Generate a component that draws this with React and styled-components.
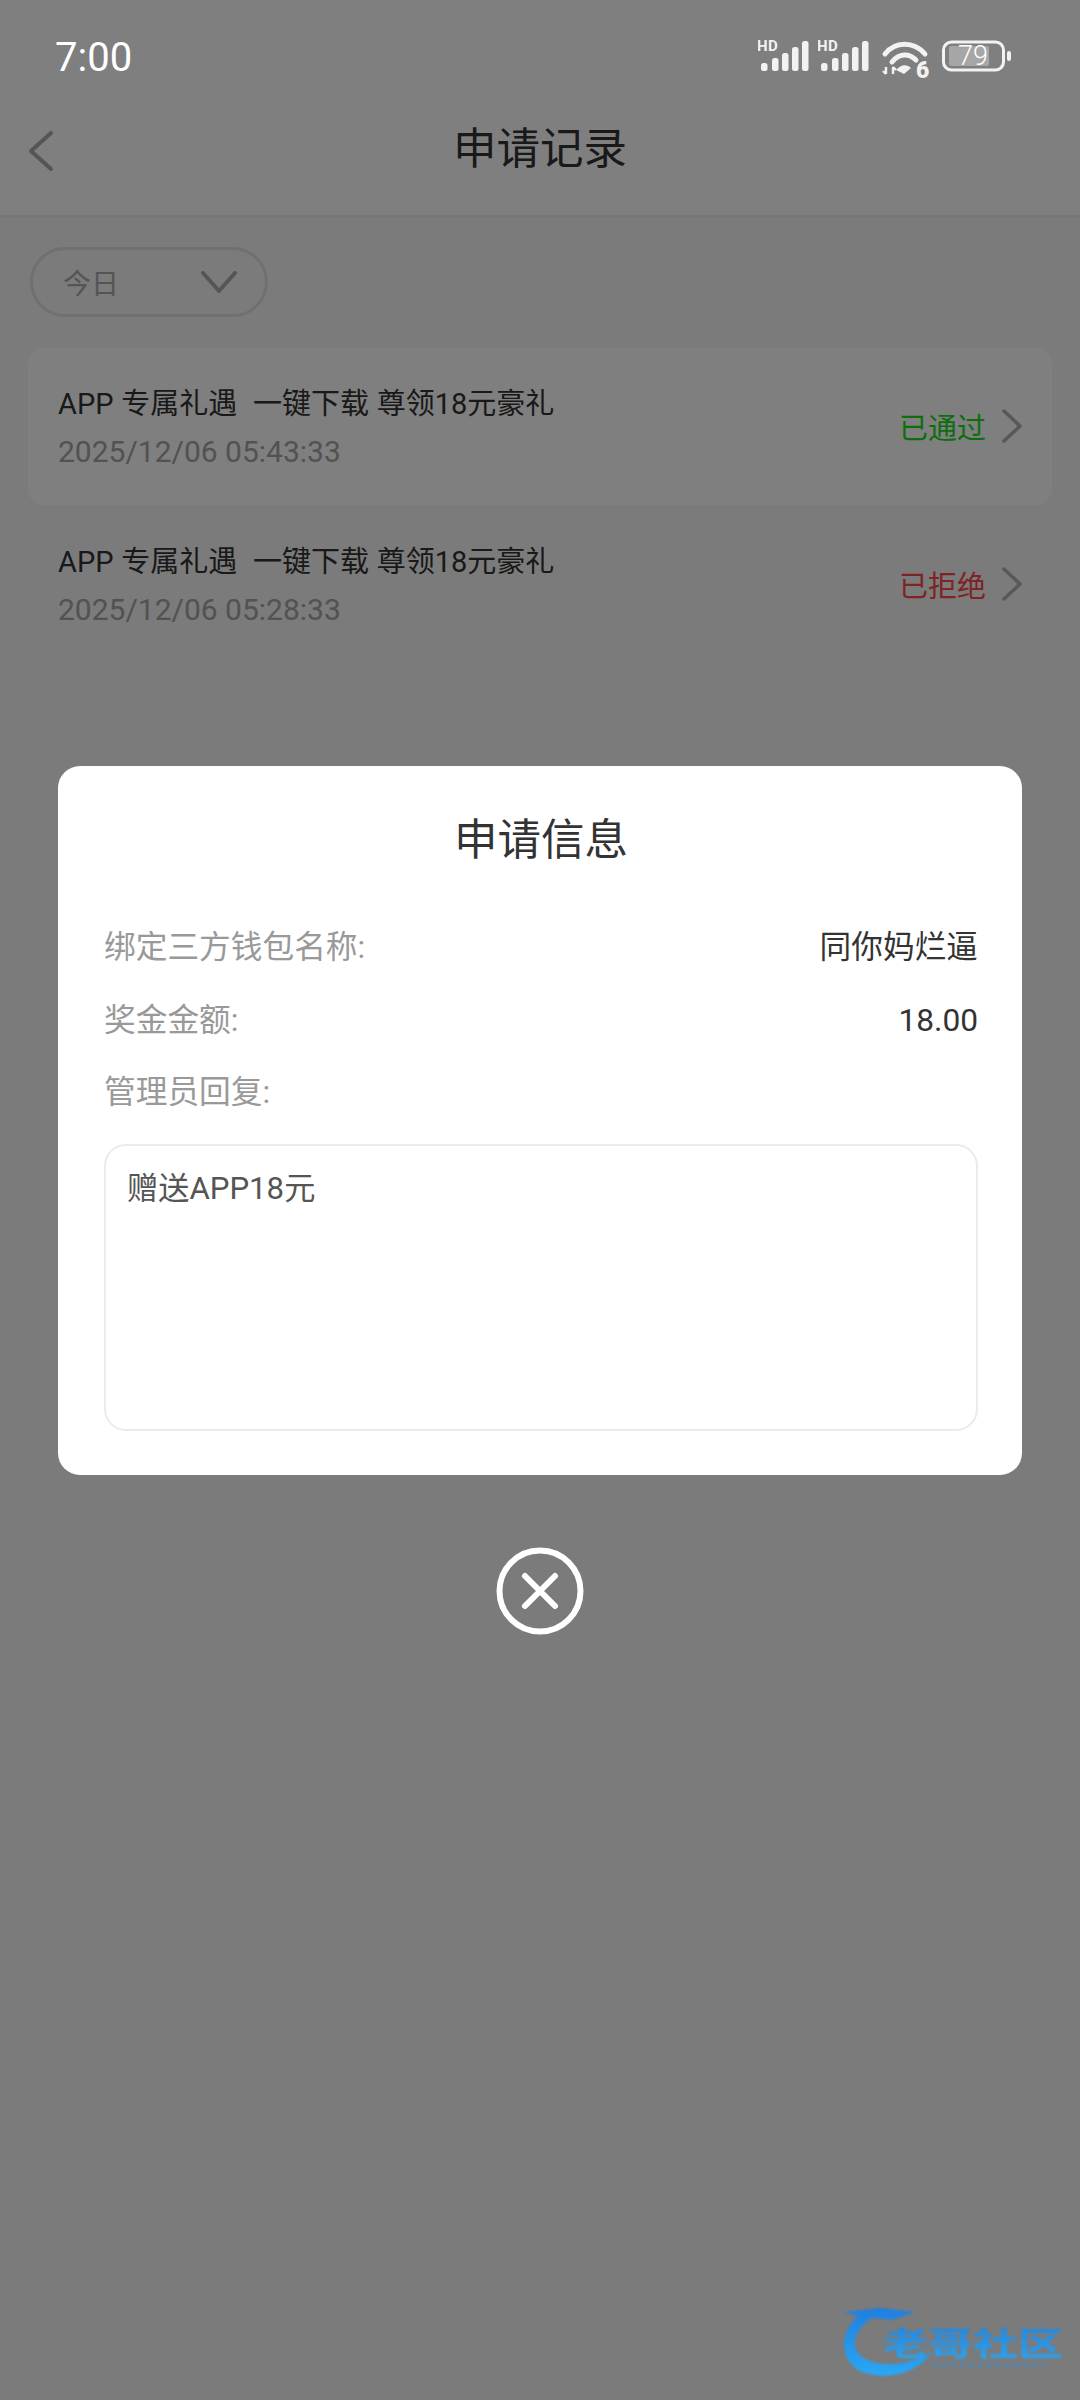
import React from 'react';
import styled, { createGlobalStyle } from 'styled-components';

const GlobalStyle = createGlobalStyle`
  html, body {
    margin: 0;
    padding: 0;
    background: #f5f5f5;
  }
  * {
    box-sizing: border-box;
  }
`;

const FONT = `Roboto, "Noto Sans CJK SC", sans-serif`;

const Page = styled.div`
  position: relative;
  width: 1080px;
  height: 2400px;
  overflow: hidden;
  background: #f6f6f6;
  font-family: ${FONT};
  font-weight: 400;
  display: flex;
  flex-direction: column;
`;

const Header = styled.div`
  background: #fff;
  border-bottom: 2px solid #ececec;
  height: 217px;
  flex-shrink: 0;
  display: flex;
  flex-direction: column;
  justify-content: flex-end;
`;

const Nav = styled.div`
  position: relative;
  height: 135px;
  display: flex;
  align-items: center;
  justify-content: center;
`;

const NavTitle = styled.div`
  font-size: 43.5px;
  line-height: 50px;
  color: #333;
  font-weight: 400;
  margin-top: 4px;
`;

const BackButton = styled.svg`
  position: absolute;
  left: 27px;
  top: 50px;
  width: 28px;
  height: 42px;
`;

const StatusBar = styled.div`
  position: absolute;
  z-index: 3;
  top: 0;
  left: 0;
  width: 1080px;
  height: 88px;
  padding: 31px 68px 0 55px;
  display: flex;
  justify-content: space-between;
  align-items: flex-start;
`;

const Time = styled.div`
  font-family: Roboto, sans-serif;
  font-size: 40px;
  line-height: 54px;
  color: #fff;
  font-weight: 400;
`;

const StatusIcons = styled.div`
  display: flex;
  align-items: flex-start;
  margin-top: 9px;
`;

const SignalIcon = styled.svg`
  width: 52px;
  height: 38px;
  margin: -4px 8px 0 0;
`;

const WifiIcon = styled.svg`
  width: 52px;
  height: 46px;
  margin: -1px 9px 0 3px;
`;

const BatteryIcon = styled.svg`
  width: 70px;
  height: 32px;
`;

const FilterBar = styled.div`
  padding: 30px 30px 31px;
`;

const FilterPill = styled.div`
  width: 238px;
  height: 70px;
  border: 3px solid #e0e0e0;
  border-radius: 35px;
  display: flex;
  align-items: center;
  justify-content: space-between;
  padding: 0 28px 0 30px;
  font-size: 28px;
  color: #aaa;
`;

const PillArrow = styled.svg`
  width: 36px;
  height: 22px;
`;

const List = styled.div`
  margin: 0 28px;
  display: flex;
  flex-direction: column;
  gap: 1px;
`;

const Row = styled.div`
  height: 157px;
  border-radius: 16px;
  background: ${(p) => (p.$active ? '#ffffff' : 'transparent')};
  padding: 0 29px 0 30px;
  display: flex;
  align-items: center;
  justify-content: space-between;
`;

const RowText = styled.div`
  display: flex;
  flex-direction: column;
  gap: 10px;
  margin-top: 3px;
`;

const RowTitle = styled.div`
  font-size: 29px;
  line-height: 38px;
  color: #333;
  white-space: pre;
  word-spacing: 0.6px;
`;

const RowDate = styled.div`
  font-size: 30px;
  line-height: 38px;
  color: #a4a4a4;
`;

const RowStatus = styled.div`
  display: flex;
  align-items: center;
  gap: 15px;
  font-size: 29px;
  color: ${(p) => p.$color};
  margin-top: -2px;
`;

const RowArrow = styled.svg`
  width: 22px;
  height: 34px;
`;

const Scrim = styled.div`
  position: absolute;
  z-index: 2;
  inset: 0;
  background: rgba(0, 0, 0, 0.5);
  display: flex;
  flex-direction: column;
  align-items: center;
  padding-top: 766px;
`;

const Modal = styled.div`
  width: 964px;
  height: 709px;
  background: #fff;
  border-radius: 22px;
  padding: 49px 44px 44px 46px;
  display: flex;
  flex-direction: column;
`;

const ModalTitle = styled.div`
  font-size: 43.5px;
  line-height: 52px;
  font-weight: 400;
  color: #333;
  text-align: center;
  margin-bottom: 59px;
`;

const InfoRow = styled.div`
  height: 72.5px;
  flex-shrink: 0;
  display: flex;
  justify-content: space-between;
  align-items: flex-start;
  font-size: 31.7px;
  line-height: 44px;
`;

const InfoLabel = styled.span`
  color: #999;
`;

const InfoValue = styled.span`
  color: #333;
`;

const ReplyBox = styled.div`
  flex: 1;
  border: 2px solid #ebebeb;
  border-radius: 22px;
  padding: 21px 21px;
  font-size: 31.2px;
  line-height: 44px;
  color: #555;
`;

const CloseIcon = styled.svg`
  width: 88px;
  height: 88px;
  margin-top: 72px;
`;

const Watermark = styled.div`
  position: absolute;
  z-index: 4;
  right: 0;
  bottom: 0;
  width: 260px;
  height: 110px;
`;

const WatermarkArt = styled.svg`
  width: 260px;
  height: 110px;
  filter: blur(1.3px);
`;

const Signal = () => (
  <SignalIcon viewBox="0 0 52 38">
    <text x="-1" y="15" fontFamily="Roboto, sans-serif" fontWeight="700" fontSize="15" letterSpacing="0.5" fill="#f2f2f2">HD</text>
    <g fill="#f2f2f2">
      <rect x="3" y="27" width="6.5" height="8" rx="2.5" />
      <rect x="14" y="22" width="6.5" height="13" rx="2.5" />
      <rect x="24" y="17" width="6.5" height="18" rx="2.5" />
      <rect x="34" y="11" width="6.5" height="24" rx="2.5" />
      <rect x="44" y="5" width="6.5" height="30" rx="2.5" />
    </g>
  </SignalIcon>
);

const Wifi = () => (
  <WifiIcon viewBox="0 0 52 46">
    <g fill="none" stroke="#f2f2f2" strokeWidth="5" strokeLinecap="round">
      <path d="M4 15 C14 2 33 2 44 15" />
      <path d="M11 23 C18 14 28 14 35 21" />
    </g>
    <path d="M15 31 C20 25 26 25 30 29 L23 35 Z" fill="#f2f2f2" />
    <text x="35" y="39" fontFamily="Roboto, sans-serif" fontWeight="900" fontSize="23" fill="#f2f2f2">6</text>
    <path d="M5 28 L5 35 M2 32 L5 35 M12 35 L12 28 M12 28 L15 31" stroke="#f2f2f2" strokeWidth="2.4" fill="none" />
  </WifiIcon>
);

const Battery = () => (
  <BatteryIcon viewBox="0 0 70 32">
    <rect x="1.5" y="2" width="60" height="28" rx="8" fill="none" stroke="#f2f2f2" strokeWidth="3" />
    <rect x="7" y="6" width="40" height="20" rx="2" fill="#a6a6a6" />
    <rect x="65" y="11" width="4" height="10" rx="2" fill="#f2f2f2" />
    <text x="31" y="25" textAnchor="middle" fontFamily="Roboto, sans-serif" fontWeight="300" fontSize="27" fill="#fff">79</text>
  </BatteryIcon>
);

const records = [
  { date: '2025/12/06 05:43:33', status: '已通过', color: '#18dc18', active: true },
  { date: '2025/12/06 05:28:33', status: '已拒绝', color: '#fa4848', active: false },
];

const App = () => {
  return (
    <Page>
      <GlobalStyle />
      <StatusBar>
        <Time>7:00</Time>
        <StatusIcons>
          <Signal />
          <Signal />
          <Wifi />
          <Battery />
        </StatusIcons>
      </StatusBar>

      <Header>
        <Nav>
          <BackButton viewBox="0 0 28 42">
            <path d="M24 3 L4 21 L24 39" fill="none" stroke="#aaa" strokeWidth="4" strokeLinecap="round" strokeLinejoin="round" />
          </BackButton>
          <NavTitle>申请记录</NavTitle>
        </Nav>
      </Header>

      <FilterBar>
        <FilterPill>
          今日
          <PillArrow viewBox="0 0 36 22">
            <path d="M2 2 L18 20 L34 2" fill="none" stroke="#aaa" strokeWidth="4" strokeLinecap="round" strokeLinejoin="round" />
          </PillArrow>
        </FilterPill>
      </FilterBar>

      <List>
        {records.map((r) => (
          <Row key={r.date} $active={r.active}>
            <RowText>
              <RowTitle>APP 专属礼遇  一键下载 尊领18元豪礼</RowTitle>
              <RowDate>{r.date}</RowDate>
            </RowText>
            <RowStatus $color={r.color}>
              {r.status}
              <RowArrow viewBox="0 0 22 34">
                <path d="M3 2 L19 17 L3 32" fill="none" stroke="#b0b0b0" strokeWidth="3.5" strokeLinecap="round" strokeLinejoin="round" />
              </RowArrow>
            </RowStatus>
          </Row>
        ))}
      </List>

      <Scrim>
        <Modal>
          <ModalTitle>申请信息</ModalTitle>
          <InfoRow>
            <InfoLabel>绑定三方钱包名称:</InfoLabel>
            <InfoValue>同你妈烂逼</InfoValue>
          </InfoRow>
          <InfoRow>
            <InfoLabel>奖金金额:</InfoLabel>
            <InfoValue>18.00</InfoValue>
          </InfoRow>
          <InfoRow>
            <InfoLabel>管理员回复:</InfoLabel>
          </InfoRow>
          <ReplyBox>赠送APP18元</ReplyBox>
        </Modal>
        <CloseIcon viewBox="0 0 88 88">
          <circle cx="44" cy="44" r="40.5" fill="none" stroke="#fff" strokeWidth="6" />
          <path d="M29 29 L59 59 M59 29 L29 59" stroke="#fff" strokeWidth="6" strokeLinecap="round" />
        </CloseIcon>
      </Scrim>

      <Watermark>
        <WatermarkArt viewBox="0 0 260 110">
          <defs>
            <linearGradient id="wmBlue" x1="0" y1="0" x2="0" y2="1">
              <stop offset="0" stopColor="#1f7fe0" />
              <stop offset="1" stopColor="#2aa8f5" />
            </linearGradient>
          </defs>
          <path d="M24 22 L60 18 L95 22 L72 30 L52 28 C34 40 28 58 44 68 C60 78 88 76 112 62 C96 86 62 90 42 82 C20 72 18 44 38 26 Z" fill="url(#wmBlue)" />
          <text x="63" y="0" transform="translate(0 65) scale(1 0.72)" fontFamily={`"Noto Sans CJK SC", sans-serif`} fontWeight="700" fontSize="45" fill="url(#wmBlue)">老哥社区</text>
          <path d="M113 75 L224 75" stroke="#2a8fe0" strokeWidth="5" strokeDasharray="5 4" opacity="0.4" />
        </WatermarkArt>
      </Watermark>
    </Page>
  );
};

export default App;
